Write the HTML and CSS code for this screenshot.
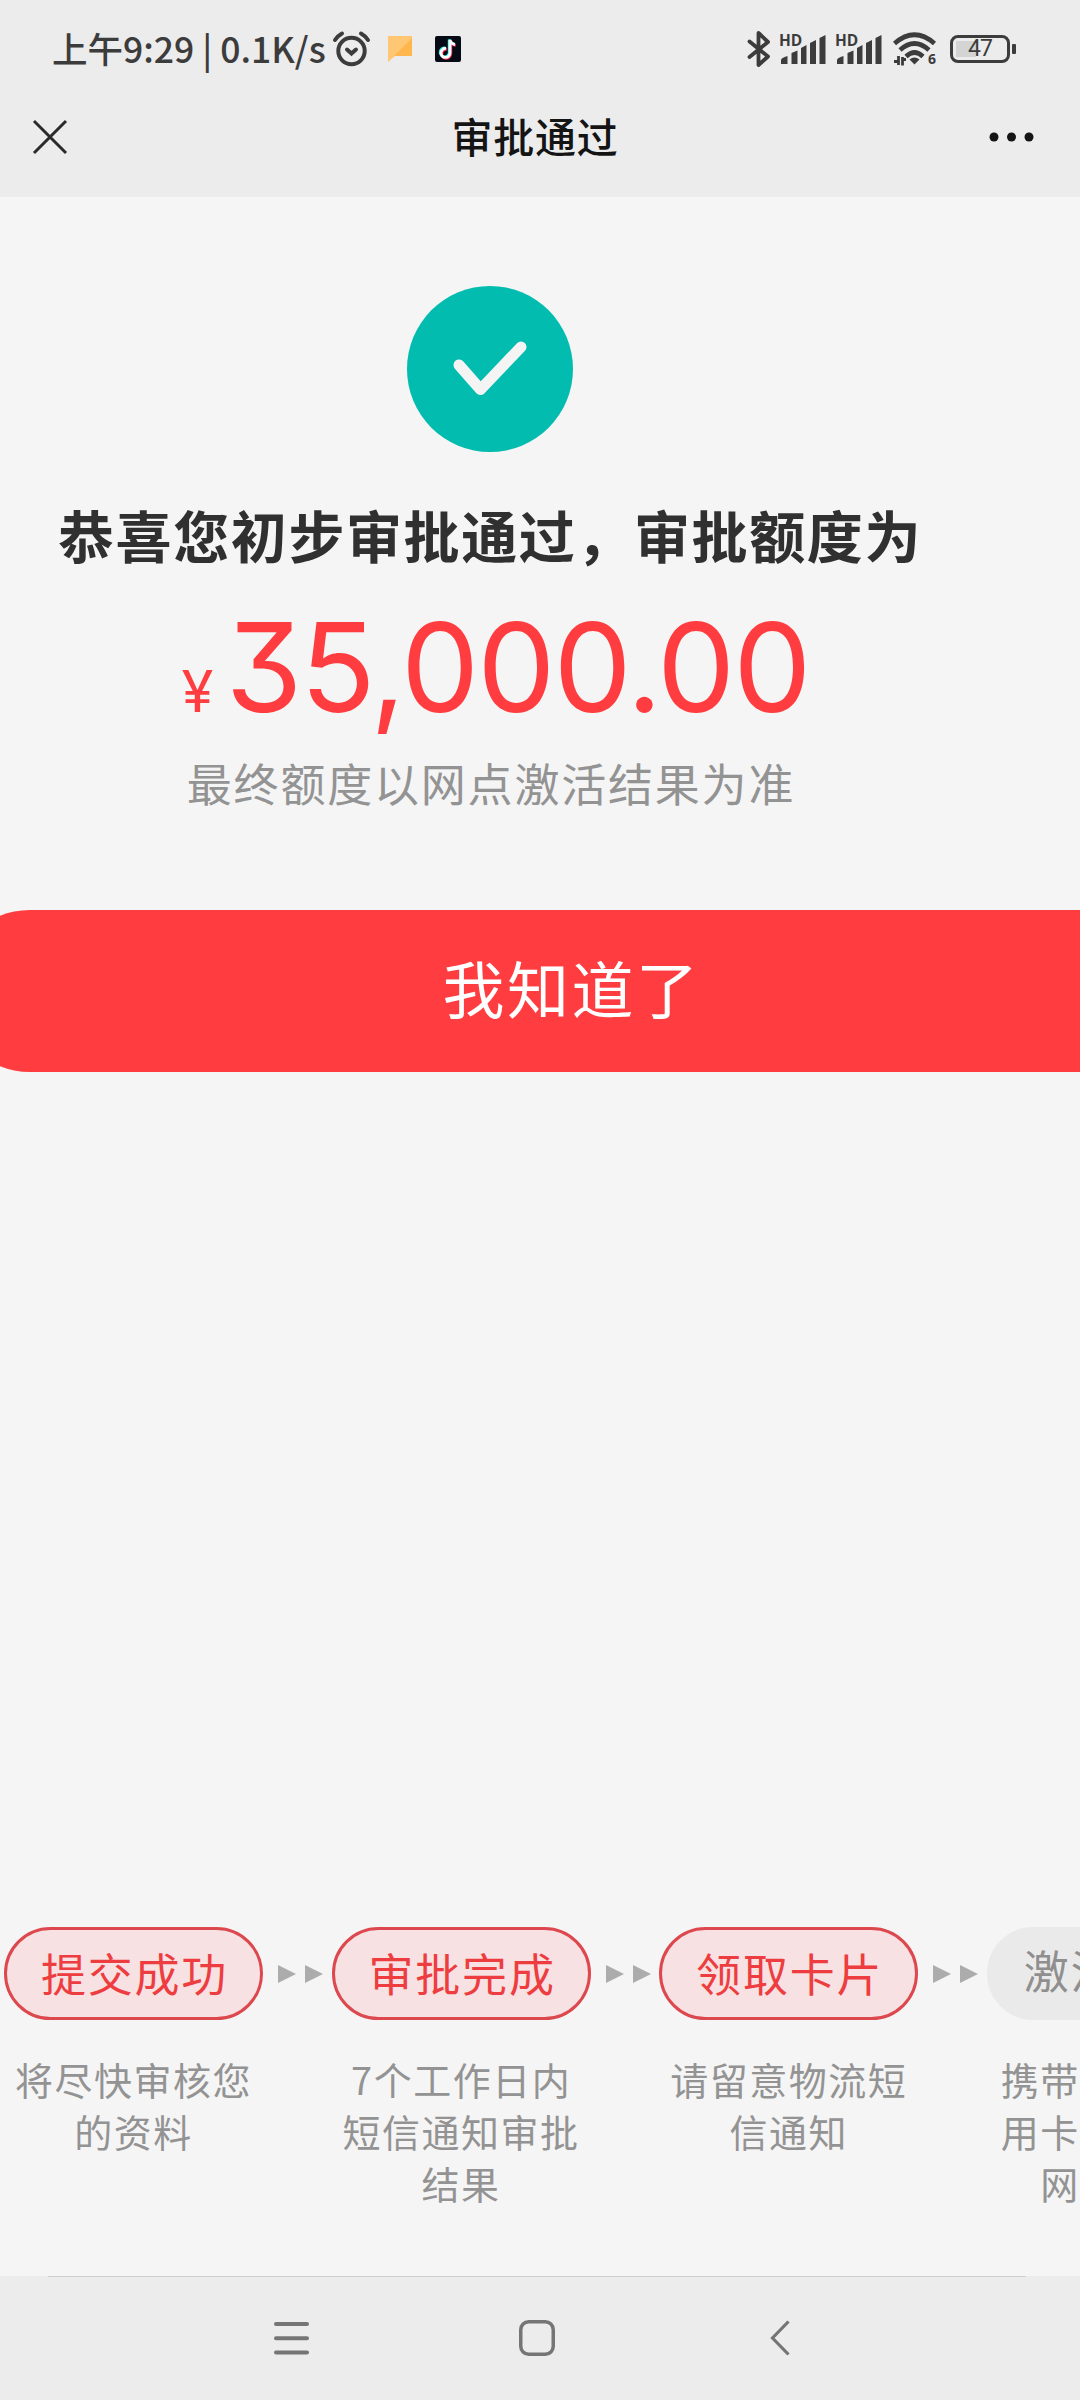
FILE: index.html
```html
<!DOCTYPE html>
<html lang="zh-CN">
<head>
    <meta charset="UTF-8">
    <meta name="viewport" content="width=device-width, initial-scale=1.0">
    <title>审批通过</title>
    <link rel="stylesheet" href="styles.css">
</head>
<body>

<div class="header">
    <div class="status-bar">
        <span class="time">上午9:29 | 0.1K/s</span>
        <svg class="alarm" width="38" height="36" viewBox="0 0 38 36" fill="none" stroke="#3c3c3c" stroke-width="4" stroke-linecap="round">
            <circle cx="19.500" cy="20" r="13.200"/>
            <path d="M15 18.500l4.500 4 4.500-4M3 9Q5.500 5 10 2.500M36 9Q33.500 5 29 2.500"/>
        </svg>
        <svg class="note" width="24" height="26" viewBox="0 0 24 26">
            <path d="M0 0H24V20H7L0 26Z" fill="#ffc773"/>
            <path d="M24 2V20H6Z" fill="#ffb74d"/>
        </svg>
        <svg class="music" width="26" height="26" viewBox="0 0 26 26" fill="none" stroke-width="2.800">
            <rect width="26" height="26" rx="2" fill="#060a14"/>
            <path d="M11 12.500a4.500 4.500 0 1 0 4 4.500V4q1 4 5 4.500" stroke="#25f4ee" transform="translate(-.8 -.6)"/>
            <path d="M11 12.500a4.500 4.500 0 1 0 4 4.500V4q1 4 5 4.500" stroke="#fe2c55" transform="translate(.8 .8)"/>
            <path d="M11 12.500a4.500 4.500 0 1 0 4 4.500V4q1 4 5 4.500" stroke="#fff"/>
        </svg>

        <div class="status-right">
            <svg class="bluetooth" width="24" height="36" viewBox="0 0 24 36" fill="none" stroke="#3c3c3c" stroke-width="3.800" stroke-linejoin="round" stroke-linecap="round">
                <path d="M2.500 10.500L21 25.500 11.500 34V2L21 11 2.500 26"/>
            </svg>
            <svg class="signal" width="48" height="32" viewBox="0 0 48 32" fill="#3c3c3c">
                <text x="0" y="13" class="hd">HD</text>
                <path d="M2 31V27Q2 25 8.500 23V31ZM12.500 31V20L18.500 17.500V31ZM22 31V15L27.500 12V31ZM31 31V10L37 7V31ZM40.500 31V5L46.500 2V31Z"/>
            </svg>
            <svg class="signal" width="48" height="32" viewBox="0 0 48 32" fill="#3c3c3c">
                <text x="0" y="13" class="hd">HD</text>
                <path d="M2 31V27Q2 25 8.500 23V31ZM12.500 31V20L18.500 17.500V31ZM22 31V15L27.500 12V31ZM31 31V10L37 7V31ZM40.500 31V5L46.500 2V31Z"/>
            </svg>
            <svg class="wifi" width="44" height="34" viewBox="0 0 44 34" fill="none" stroke="#3c3c3c" stroke-width="4.600">
                <path d="M1.500 11.500Q21.500 -6 41.500 11.500M7 18Q21.500 5 36 18M13 24.500Q21.500 16.500 30 24.500"/>
                <path d="M16.500 27.500Q21.500 23.500 26.500 27.500L21.500 32.500Z" fill="#3c3c3c" stroke="none"/>
                <path d="M5.500 24V33M1 29.500H5M9.500 33.500V25M10 27.500H13" stroke-width="2.800"/>
                <text x="35" y="32" class="six">6</text>
            </svg>
            <div class="battery">47</div>
        </div>
    </div>

    <div class="title-bar">
        <svg class="close" width="36" height="36" viewBox="0 0 36 36" fill="none" stroke="#2b2b2b" stroke-width="3">
            <path d="M2 2L34 34M34 2L2 34"/>
        </svg>
        <h1 class="title">审批通过</h1>
        <svg class="more" width="46" height="10" viewBox="0 0 46 10" fill="#141414">
            <circle cx="5" cy="5" r="4.500"/>
            <circle cx="22.500" cy="5" r="4.500"/>
            <circle cx="40" cy="5" r="4.500"/>
        </svg>
    </div>
</div>

<div class="content">
    <div class="result">
        <svg class="success" width="166" height="166" viewBox="0 0 166 166" fill="none">
            <circle cx="83" cy="83" r="83" fill="#02bdaf"/>
            <path d="M52 79L73.500 103.500L114 61" stroke="#f4f4f4" stroke-width="11" stroke-linecap="round" stroke-linejoin="round"/>
        </svg>
        <h2 class="congrats">恭喜您初步审批通过，审批额度为</h2>
        <div class="amount"><span class="currency">¥</span>35,000.00</div>
        <p class="tip">最终额度以网点激活结果为准</p>
    </div>

    <button class="btn">我知道了</button>

    <div class="steps">
        <div class="step">
            <div class="pill">提交成功</div>
            <p class="desc">将尽快审核您<br>的资料</p>
        </div>
        <div class="arrows"><i></i><i></i></div>
        <div class="step">
            <div class="pill">审批完成</div>
            <p class="desc">7个工作日内<br>短信通知审批<br>结果</p>
        </div>
        <div class="arrows"><i></i><i></i></div>
        <div class="step">
            <div class="pill">领取卡片</div>
            <p class="desc">请留意物流短<br>信通知</p>
        </div>
        <div class="arrows"><i></i><i></i></div>
        <div class="step last">
            <div class="pill pending">激活用卡</div>
            <p class="desc">携带身份证信<br>用卡前往就近<br>网点激活</p>
        </div>
    </div>
</div>

<div class="nav">
    <svg width="36" height="36" viewBox="0 0 36 36" stroke="#757575" stroke-width="4" stroke-linecap="round">
        <path d="M3 4H34M3 18.200H34M3 32.400H34"/>
    </svg>
    <svg width="36" height="36" viewBox="0 0 36 36" fill="none" stroke="#757575" stroke-width="3.500">
        <rect x="1.750" y="1.750" width="32.500" height="32.500" rx="8"/>
    </svg>
    <svg class="back" width="20" height="36" viewBox="0 0 20 36" fill="none" stroke="#757575" stroke-width="3.200">
        <path d="M18.500 1.500L2.500 18L18.500 34.500"/>
    </svg>
</div>

</body>
</html>
```
FILE: styles.css
```css
* {
    box-sizing: border-box;
    margin: 0;
    padding: 0;
}

body {
    display: flex;
    flex-direction: column;
    width: 1080px;
    height: 2400px;
    font-family: "Noto Sans CJK SC", sans-serif;
    background-color: #f5f5f5;
    overflow: hidden;
}

svg {
    display: block;
    flex: none;
    overflow: visible;
}

.header {
    height: 197px;
    background-color: #ececec;
}

.status-bar {
    display: flex;
    align-items: center;
    height: 98px;
    padding: 0 64px 0 52px;
    color: #3c3c3c;
}

.time {
    width: 280px;
    padding-bottom: 3px;
    font-size: 35.5px;
    font-weight: 500;
    white-space: nowrap;
}

.note {
    margin-left: 18px;
}

.music {
    margin-left: 23px;
}

.status-right {
    display: flex;
    align-items: center;
    margin-left: auto;
}

.signal {
    margin-left: 8px;
}

.hd {
    font: bold 15.5px "Open Sans", sans-serif;
}

.wifi {
    margin-left: 10px;
}

.six {
    font: bold 14px "Open Sans", sans-serif;
    fill: #3c3c3c;
    stroke: none;
}

.battery {
    position: relative;
    width: 60px;
    height: 28px;
    margin-left: 13px;
    margin-right: 6px;
    border: 3px solid #3c3c3c;
    border-radius: 8px;
    background: linear-gradient(#d4d4d4, #d4d4d4) 3px 3px / 20px 16px no-repeat;
    font: 400 23px/22px Roboto, sans-serif;
    letter-spacing: -1px;
    text-align: center;
}

.battery::after {
    content: "";
    position: absolute;
    top: 6px;
    right: -9px;
    width: 4px;
    height: 10px;
    border-radius: 1px;
    background-color: #3c3c3c;
}

.title-bar {
    display: flex;
    align-items: center;
    justify-content: space-between;
    height: 78px;
    padding: 0 45px 0 32px;
}

.title {
    padding: 0 0 5px 13px;
    font-size: 41px;
    font-weight: 500;
    letter-spacing: 0.8px;
    color: #141414;
}

.content {
    flex: 1;
    overflow: hidden;
}

.result {
    display: flex;
    flex-direction: column;
    align-items: center;
    width: 980px;
    padding-top: 89px;
}

.congrats {
    margin-top: 42px;
    font-size: 56px;
    font-weight: 700;
    letter-spacing: 1.6px;
    line-height: 80px;
    color: #303030;
    white-space: nowrap;
}

.amount {
    margin-top: 28px;
    padding-left: 11px;
    font-family: Inter, sans-serif;
    font-size: 124px;
    font-feature-settings: "cv09";
    letter-spacing: -2px;
    line-height: 130px;
    color: #ff3c3f;
}

.currency {
    margin-right: 14px;
    font-size: 58px;
}

.tip {
    margin-top: -6px;
    padding-left: 2px;
    font-size: 45px;
    letter-spacing: 1.8px;
    line-height: 66px;
    color: #939393;
}

.btn {
    display: block;
    width: 1242px;
    height: 162px;
    margin: 94px 0 0 -51px;
    padding: 0 0 9px 3px;
    border: none;
    border-radius: 81px;
    background-color: #ff3c3f;
    color: #fff;
    font-family: inherit;
    font-size: 62px;
    letter-spacing: 2.5px;
}

.steps {
    display: flex;
    margin: 855px 0 0 4px;
}

.step {
    flex: none;
    width: 259px;
    text-align: center;
}

.pill {
    height: 93px;
    padding-left: 2px;
    border: 3px solid #dd484f;
    border-radius: 47px;
    background-color: #f7e1e2;
    color: #ee3d40;
    font-size: 45px;
    letter-spacing: 1.8px;
    line-height: 86px;
}

.pending {
    border-color: #eaeaea;
    background-color: #eaeaea;
    color: #8f8f8f;
    line-height: 80px;
}

.desc {
    margin-top: 33px;
    font-size: 38px;
    letter-spacing: 1.5px;
    line-height: 52px;
    color: #939393;
}

.last .desc {
    padding-left: 6px;
}

.arrows {
    display: flex;
    flex: none;
    gap: 9px;
    width: 68.6px;
    padding: 38px 0 0 15px;
}

.arrows i {
    width: 0;
    height: 0;
    border: solid transparent;
    border-width: 9px 0 9px 18px;
    border-left-color: #acacac;
}

.nav {
    display: flex;
    align-items: center;
    gap: 210px;
    position: relative;
    height: 124px;
    padding: 0 0 0 273px;
    background-color: #ececec;
}

.nav::before {
    content: "";
    position: absolute;
    top: 0;
    left: 48px;
    width: 978px;
    height: 1px;
    background-color: #cfcfcf;
}

.back {
    margin-left: 5px;
}
```
